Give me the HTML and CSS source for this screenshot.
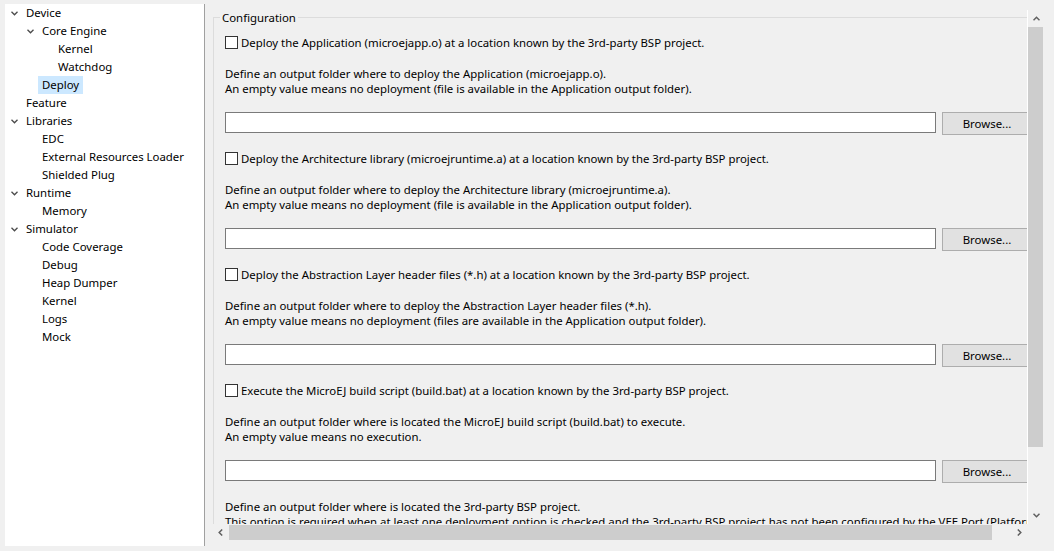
FILE: index.html
```html
<!DOCTYPE html>
<html>
<head>
	<title>Deploy</title>
	<link rel="stylesheet" href="styles.css">
</head>
<body>
	<div class="window">
		<div class="tree">
			<ul>
				<li class="lv0"><span class="twisty"><svg viewBox="0 0 7 5"><path d="M0.5 0.8L3.5 3.8L6.5 0.8"/></svg></span><span class="label">Device</span></li>
				<li class="lv1"><span class="twisty"><svg viewBox="0 0 7 5"><path d="M0.5 0.8L3.5 3.8L6.5 0.8"/></svg></span><span class="label">Core Engine</span></li>
				<li class="lv2"><span class="twisty"></span><span class="label">Kernel</span></li>
				<li class="lv2"><span class="twisty"></span><span class="label">Watchdog</span></li>
				<li class="lv1"><span class="twisty"></span><span class="label selected">Deploy</span></li>
				<li class="lv0"><span class="twisty"></span><span class="label">Feature</span></li>
				<li class="lv0"><span class="twisty"><svg viewBox="0 0 7 5"><path d="M0.5 0.8L3.5 3.8L6.5 0.8"/></svg></span><span class="label">Libraries</span></li>
				<li class="lv1"><span class="twisty"></span><span class="label">EDC</span></li>
				<li class="lv1"><span class="twisty"></span><span class="label">External Resources Loader</span></li>
				<li class="lv1"><span class="twisty"></span><span class="label">Shielded Plug</span></li>
				<li class="lv0"><span class="twisty"><svg viewBox="0 0 7 5"><path d="M0.5 0.8L3.5 3.8L6.5 0.8"/></svg></span><span class="label">Runtime</span></li>
				<li class="lv1"><span class="twisty"></span><span class="label">Memory</span></li>
				<li class="lv0"><span class="twisty"><svg viewBox="0 0 7 5"><path d="M0.5 0.8L3.5 3.8L6.5 0.8"/></svg></span><span class="label">Simulator</span></li>
				<li class="lv1"><span class="twisty"></span><span class="label">Code Coverage</span></li>
				<li class="lv1"><span class="twisty"></span><span class="label">Debug</span></li>
				<li class="lv1"><span class="twisty"></span><span class="label">Heap Dumper</span></li>
				<li class="lv1"><span class="twisty"></span><span class="label">Kernel</span></li>
				<li class="lv1"><span class="twisty"></span><span class="label">Logs</span></li>
				<li class="lv1"><span class="twisty"></span><span class="label">Mock</span></li>
			</ul>
		</div>

		<div class="pane">
			<div class="scroller">
				<div class="viewport">
					<fieldset class="group">
						<legend>Configuration</legend>

						<div class="section">
							<label class="check"><input type="checkbox">Deploy the Application (microejapp.o) at a location known by the 3rd-party BSP project.</label>
							<div class="note">Define an output folder where to deploy the Application (microejapp.o).<br>An empty value means no deployment (file is available in the Application output folder).</div>
							<div class="field"><input type="text"><button>Browse...</button></div>
						</div>

						<div class="section">
							<label class="check"><input type="checkbox">Deploy the Architecture library (microejruntime.a) at a location known by the 3rd-party BSP project.</label>
							<div class="note">Define an output folder where to deploy the Architecture library (microejruntime.a).<br>An empty value means no deployment (file is available in the Application output folder).</div>
							<div class="field"><input type="text"><button>Browse...</button></div>
						</div>

						<div class="section">
							<label class="check"><input type="checkbox">Deploy the Abstraction Layer header files (*.h) at a location known by the 3rd-party BSP project.</label>
							<div class="note">Define an output folder where to deploy the Abstraction Layer header files (*.h).<br>An empty value means no deployment (files are available in the Application output folder).</div>
							<div class="field"><input type="text"><button>Browse...</button></div>
						</div>

						<div class="section">
							<label class="check"><input type="checkbox">Execute the MicroEJ build script (build.bat) at a location known by the 3rd-party BSP project.</label>
							<div class="note">Define an output folder where is located the MicroEJ build script (build.bat) to execute.<br>An empty value means no execution.</div>
							<div class="field"><input type="text"><button>Browse...</button></div>
						</div>

						<div class="section">
							<div class="note">Define an output folder where is located the 3rd-party BSP project.<br>This option is required when at least one deployment option is checked and the 3rd-party BSP project has not been configured by the VEE Port (Platform).</div>
						</div>
					</fieldset>
				</div>

				<div class="vbar">
					<span class="arrow"><svg viewBox="0 0 7 5"><path d="M0.5 4.2L3.5 1.2L6.5 4.2"/></svg></span>
					<span class="vthumb"></span>
					<span class="spacer"></span>
					<span class="arrow"><svg viewBox="0 0 7 5"><path d="M0.5 0.8L3.5 3.8L6.5 0.8"/></svg></span>
				</div>

				<div class="hbar">
					<span class="arrow"><svg class="side" viewBox="0 0 5 7"><path d="M4.2 0.5L1.2 3.5L4.2 6.5"/></svg></span>
					<span class="hthumb"></span>
					<span class="spacer"></span>
					<span class="arrow"><svg class="side" viewBox="0 0 5 7"><path d="M0.8 0.5L3.8 3.5L0.8 6.5"/></svg></span>
				</div>

				<div class="corner"></div>
			</div>
		</div>
	</div>
</body>
</html>
```

FILE: styles.css
```css
html, body {
	margin: 0;
}

body {
	background: #f0f0f0;
	font: 11.4px "Noto Sans", "Liberation Sans", sans-serif;
	color: #000;
}

.window {
	display: flex;
	height: 551px;
	padding: 4px 9px 0 5px;
	box-sizing: border-box;
}

/* tree */
.tree {
	width: 199px;
	height: 542px;
	background: #fff;
	border-right: 1px solid #a0a0a0;
	overflow: hidden;
}

.tree ul {
	list-style: none;
	margin: 0;
	padding: 0;
}

.tree li {
	display: flex;
	align-items: center;
	height: 18px;
	padding-left: 5px;
	white-space: nowrap;
}

.tree li.lv1 {
	padding-left: 21px;
}

.tree li.lv2 {
	padding-left: 37px;
}

.twisty {
	display: flex;
	align-items: center;
	width: 12px;
	height: 18px;
	flex: none;
}

.twisty svg {
	width: 7px;
	height: 5px;
	margin-left: 1px;
	fill: none;
	stroke: #4a4a4a;
	stroke-width: 1.3;
}

.label {
	padding: 0 4px;
	line-height: 18px;
}

.label.selected {
	background: #cce8ff;
}

/* right pane */
.pane {
	flex: 1;
	padding: 6px 0 0 7px;
}

.scroller {
	display: grid;
	grid-template-columns: 816px 17px;
	grid-template-rows: 514px 17px;
}

.viewport {
	overflow: hidden;
	border-right: 1px solid #fff;
}

.group {
	width: 807px;
	min-width: 0;
	margin: 0 0 0 1px;
	padding: 10px 12px 0 11px;
	border: 1px solid #dcdcdc;
}

.group legend {
	margin-left: -5px;
	padding: 0 2px;
	line-height: 15px;
}

.section + .section {
	margin-top: 16px;
}

.check {
	display: flex;
	align-items: center;
	gap: 3px;
	height: 15px;
	white-space: nowrap;
}

.check input {
	appearance: none;
	width: 13px;
	height: 13px;
	margin: 0;
	border: 1px solid #333;
	background: #fff;
	box-sizing: border-box;
}

.note {
	line-height: 15px;
	white-space: nowrap;
}

.check + .note {
	margin-top: 16px;
}

.field {
	display: flex;
	align-items: flex-start;
	gap: 6px;
	margin-top: 16px;
}

.field input {
	flex: 1;
	height: 21px;
	margin: 0;
	border: 1px solid #7a7a7a;
	background: #fff;
	box-sizing: border-box;
}

.field button {
	width: 90px;
	height: 23px;
	padding: 0;
	border: 1px solid #adadad;
	background: #e1e1e1;
	font: inherit;
	color: #000;
	flex: none;
}

/* scrollbars */
.vbar, .hbar {
	display: flex;
	background: #f0f0f0;
}

.vbar {
	flex-direction: column;
}

.arrow {
	display: flex;
	align-items: center;
	justify-content: center;
	width: 17px;
	height: 17px;
	flex: none;
}

.arrow svg {
	width: 7px;
	height: 5px;
	fill: none;
	stroke: #606060;
	stroke-width: 1.5;
}

.arrow svg.side {
	width: 5px;
	height: 7px;
}

.spacer {
	flex: 1;
}

.vthumb {
	width: 15px;
	height: 420px;
	background: #cdcdcd;
}

.hthumb {
	width: 763px;
	height: 15px;
	margin-top: 1px;
	background: #cdcdcd;
}
```
